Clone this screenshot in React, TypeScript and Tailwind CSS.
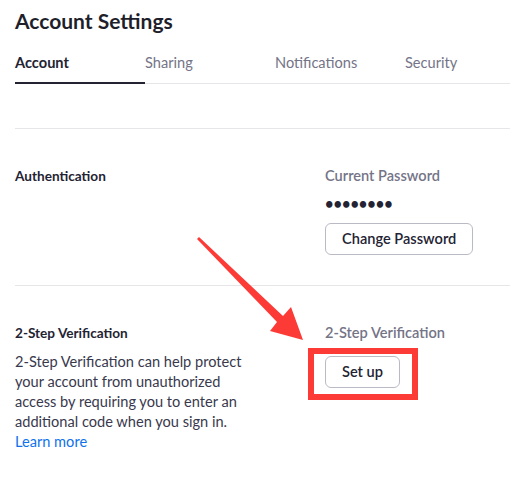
import React from "react";

export default function App() {
  const tabs = ["Account", "Sharing", "Notifications", "Security"];
  return (
    <div
      className="relative w-[510px] h-[481px] overflow-hidden bg-white text-[#232333]"
      style={{ fontFamily: "Lato, 'Open Sans', sans-serif" }}
    >
      <div className="pl-[15px]">
        <h1 className="pt-[9px] text-[21px] leading-[24px] font-bold text-[#1f1f2b]">
          Account Settings
        </h1>
        <div className="mt-[20px] flex border-b border-[#e6e6e9]">
          {tabs.map((t, i) => (
            <div
              key={t}
              className={
                i === 0
                  ? "shrink-0 w-[130px] h-[31px] -mb-px border-b-2 border-[#232333] text-[14.6px] leading-[20px] font-bold text-[#232333]"
                  : "shrink-0 w-[130px] h-[30px] text-[14.6px] leading-[20px] text-[#747487]"
              }
            >
              {t}
            </div>
          ))}
        </div>

        <div className="mt-[44px] border-t border-[#e6e6e9]" />

        <div className="flex pt-[37px] pb-[30px]">
          <div className="w-[310px] shrink-0 text-[13.6px] leading-[20px] font-bold text-[#232333]">
            Authentication
          </div>
          <div className="flex flex-col items-start">
            <div className="text-[14.6px] leading-[20px] font-semibold text-[#747487]">
              Current Password
            </div>
            <div className="mt-[8px] text-[14.6px] leading-[20px] font-bold text-[#232333]">
              ••••••••
            </div>
            <button className="mt-[9px] h-[32px] px-[16px] rounded-[6px] border border-[#babac4] bg-white text-[14.6px] font-semibold text-[#232333]">
              Change Password
            </button>
          </div>
        </div>

        <div className="border-t border-[#e6e6e9]" />

        <div className="flex pt-[37px]">
          <div className="w-[310px] shrink-0">
            <div className="text-[13.6px] leading-[20px] font-bold text-[#232333]">
              2-Step Verification
            </div>
            <p className="mt-[9px] w-[245px] text-[14.6px] leading-[20px] text-[#39394d]">
              2-Step Verification can help protect your account from unauthorized access by
              requiring you to enter an additional code when you sign in.
              <br />
              <span className="text-[#0e72ed]">Learn more</span>
            </p>
          </div>
          <div className="flex flex-col items-start">
            <div className="text-[14.6px] leading-[20px] font-semibold text-[#747487]">
              2-Step Verification
            </div>
            <button className="mt-[13px] h-[32px] px-[16px] rounded-[6px] border border-[#babac4] bg-white text-[14.6px] font-semibold text-[#232333]">
              Set up
            </button>
          </div>
        </div>
      </div>

      {/* annotation: red highlight box */}
      <div className="absolute left-[308px] top-[348px] w-[110px] h-[52px] border-[6px] border-[#fc3b37]" />

      {/* annotation: red arrow */}
      <svg className="absolute left-0 top-0" width="510" height="481" viewBox="0 0 510 481">
        <polygon
          points="199,237 283,316 291,307 303,340 270,331 277,322 197,239"
          fill="#fc3b37"
        />
      </svg>
    </div>
  );
}
